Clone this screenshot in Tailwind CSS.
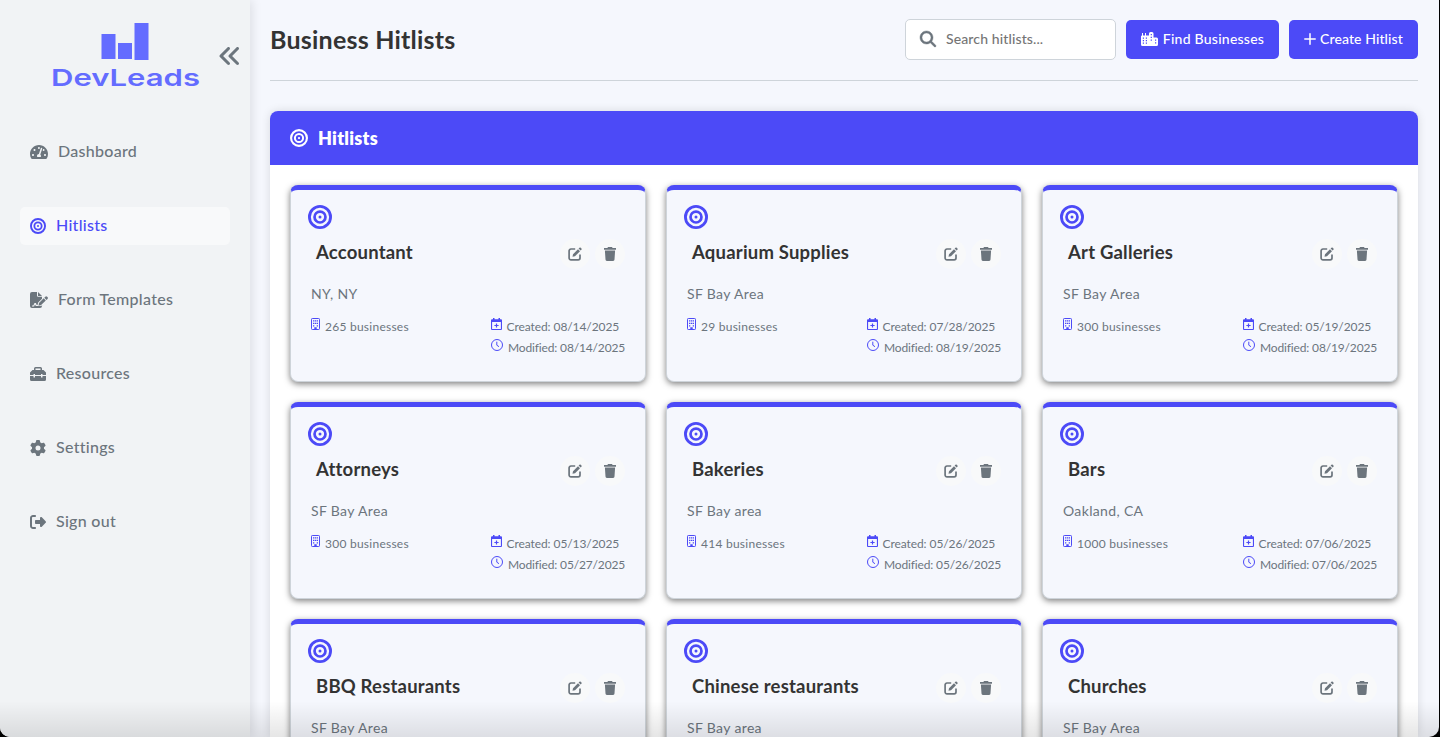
<!DOCTYPE html>
<html lang="en">
<head>
<meta charset="utf-8">
<title>DevLeads – Business Hitlists</title>
<script src="https://cdn.jsdelivr.net/npm/@tailwindcss/browser@4"></script>
</head>
<body class="h-[737px] overflow-hidden bg-black font-['Lato','Open_Sans',sans-serif] text-[#333]">
<svg class="hidden">
  <symbol id="target" viewBox="0 0 16 16"><g fill="none" stroke="currentColor"><circle cx="8" cy="8" r="7.05" stroke-width="1.9"/><circle cx="8" cy="8" r="3.65" stroke-width="1.8"/></g><circle cx="8" cy="8" r="1" fill="currentColor"/></symbol>
  <symbol id="edit" viewBox="0 0 14 14"><path d="M7.2 2H3.1A1.9 1.9 0 0 0 1.1 4v7A1.9 1.9 0 0 0 3.1 12.9h7A1.9 1.9 0 0 0 12 11V7.6" fill="none" stroke="currentColor" stroke-width="1.7"/><path d="M5 7.2 10 2.2 12 4.2 7 9.2 4.5 9.7ZM10.6 1.6l.8-.8a1 1 0 0 1 1.4 0l.6.6a1 1 0 0 1 0 1.4l-.8.8Z" fill="currentColor"/></symbol>
  <symbol id="trash" viewBox="0 0 12 14"><path d="M4 0h4l.6 1H12v1.8H0V1h3.4ZM.9 3.6h10.2l-.6 9a1.4 1.4 0 0 1-1.4 1.4H2.9a1.4 1.4 0 0 1-1.4-1.4Z" fill="currentColor"/></symbol>
  <symbol id="building" viewBox="0 0 9 12"><rect x=".5" y=".5" width="8" height="11" rx=".8" fill="none" stroke="currentColor"/><path d="M2 2.200h1.300v1.300H2zM3.850 2.200h1.300v1.300H3.850zM5.700 2.200H7v1.300H5.700zM2 4.700h1.300V6H2zM3.850 4.700h1.300V6H3.850zM5.700 4.700H7V6H5.700zM2 7.200h1.300v1.200H2zM5.700 7.200H7v1.200H5.700zM3.300 9.200h2.400V12H3.300z" fill="currentColor"/></symbol>
  <symbol id="calendar" viewBox="0 0 11 12"><path d="M2 0h1.500v1.200h4V0H9v1.200h1a1 1 0 0 1 1 1V11a1 1 0 0 1-1 1H1a1 1 0 0 1-1-1V2.200a1 1 0 0 1 1-1h1ZM1.100 4v6.900h8.800V4ZM4.900 5.500h1.200v1.400h1.500v1.200H6.100v1.400H4.900V8.100H3.400V6.900h1.500Z" fill="currentColor" fill-rule="evenodd"/></symbol>
  <symbol id="clock" viewBox="0 0 12 12"><g fill="none" stroke="currentColor"><circle cx="6" cy="6" r="5.5"/><path d="M5.800 2.700v3.500l2.200 1.500"/></g></symbol>
</svg>

<div class="relative flex h-[737px] w-[1438.500px] overflow-hidden rounded-b-[10px] bg-[#f5f7fd]">
  <aside class="z-10 w-[250px] shrink-0 bg-[#f1f3f5] px-5 text-base font-medium tracking-[0.28px] text-[#6c757d] shadow-[2px_0_10px_rgba(0,0,0,0.1)]">
    <div class="relative h-[133px] pt-[22px]">
      <svg class="ml-[30px] h-[70px] w-[152px]" viewBox="-2 0 152 70" fill="#646cff">
        <rect x="49.500" y="12" width="14" height="25"/><rect x="66" y="21" width="14" height="16"/><rect x="82.500" y="1" width="14" height="37"/>
        <text x="-1" y="63.800" font-family="Inter, sans-serif" font-weight="600" font-size="23.500" letter-spacing="0" textLength="149" lengthAdjust="spacingAndGlyphs">DevLeads</text>
      </svg>
      <svg class="absolute left-[197.500px] top-[44px] size-6" viewBox="0 0 512 512" fill="currentColor"><path d="M41.400 233.400c-12.500 12.500-12.500 32.800 0 45.300l160 160c12.500 12.500 32.800 12.500 45.300 0s12.500-32.800 0-45.300L109.300 256 246.600 118.600c12.500-12.500 12.500-32.800 0-45.300s-32.800-12.500-45.300 0l-160 160zm352-160l-160 160c-12.500 12.500-12.500 32.800 0 45.300l160 160c12.500 12.500 32.800 12.500 45.300 0s12.500-32.800 0-45.300L301.300 256 438.600 118.600c12.500-12.500 12.500-32.800 0-45.300s-32.800-12.500-45.300 0z"/></svg>
    </div>
    <nav class="flex flex-col gap-9">
      <a class="flex h-[38px] items-center gap-2.5 rounded-[5px] px-2.5">
        <svg class="h-4 w-[18px]" viewBox="0 0 576 512" fill="currentColor"><path d="M288 32C128.940 32 0 160.940 0 320c0 52.800 14.250 102.260 39.060 144.800 5.610 9.620 16.300 15.200 27.440 15.200h443c11.140 0 21.830-5.580 27.440-15.200C561.750 422.260 576 372.800 576 320c0-159.060-128.940-288-288-288zm0 64c14.710 0 26.580 10.130 30.320 23.650-1.110 2.260-2.640 4.230-3.450 6.670l-9.220 27.670c-5.130 3.490-10.970 6.010-17.640 6.010-17.670 0-32-14.330-32-32S270.330 96 288 96zM96 384c-17.670 0-32-14.330-32-32s14.330-32 32-32 32 14.330 32 32-14.330 32-32 32zm48-160c-17.670 0-32-14.330-32-32s14.330-32 32-32 32 14.330 32 32-14.330 32-32 32zm246.770-72.410l-61.330 184C343.130 347.330 352 364.540 352 384c0 11.720-3.380 22.550-8.880 32H232.880c-5.500-9.450-8.880-20.280-8.880-32 0-33.940 26.500-61.430 59.900-63.590l61.340-184.010c4.170-12.560 17.730-19.450 30.360-15.170 12.570 4.190 19.350 17.790 15.170 30.360zm14.660 57.200l15.520-46.550c3.470-1.290 7.130-2.230 11.050-2.230 17.670 0 32 14.330 32 32s-14.330 32-32 32c-11.380-.01-20.890-6.280-26.570-15.220zM480 384c-17.670 0-32-14.330-32-32s14.330-32 32-32 32 14.330 32 32-14.330 32-32 32z"/></svg>
        <span class="pb-0.5">Dashboard</span></a>
      <a class="flex h-[38px] items-center gap-2.5 rounded-[5px] bg-[#f8f9fa] px-2.5 text-[#4c4af7]">
        <svg class="size-4"><use href="#target"/></svg><span class="pb-0.5">Hitlists</span></a>
      <a class="flex h-[38px] items-center gap-2.5 rounded-[5px] px-2.5">
        <svg class="h-4 w-[18px]" viewBox="0 0 18 16" fill="currentColor"><path d="M2 0h5v3.500c0 .8.500 1.300 1.300 1.300H12v2L8.200 10.500 7.500 13H6.700l-.8-2-1.400.1-1.200 2.300H2v1h2l1-2 .9 1.600h4.300l2.200-.6L12 14a2 2 0 0 1-2 2H2a2 2 0 0 1-2-2V2A2 2 0 0 1 2 0ZM8 0l4 3.900H8ZM9 11l4.700-4.700 2.100 2.100-4.700 4.700-2.600.6ZM14.300 5.700l1-1a1.300 1.300 0 0 1 1.800 0l.4.400a1.300 1.300 0 0 1 0 1.800l-1 1Z"/></svg>
        <span class="pb-0.5">Form Templates</span></a>
      <a class="flex h-[38px] items-center gap-2.5 rounded-[5px] px-2.5">
        <svg class="size-4" viewBox="0 0 16 16" fill="currentColor"><path d="M4 4V2.500A1.500 1.500 0 0 1 5.500 1h5A1.500 1.500 0 0 1 12 2.500V4h1.500L16 6.500V9h-3.500V8H11v1H5V8H3.500v1H0V6.500L2.500 4Zm1.500 0h5V2.500h-5ZM0 10h3.500v1.500H5V10h6v1.500h1.500V10H16v3.500a1.500 1.500 0 0 1-1.500 1.500h-13A1.500 1.500 0 0 1 0 13.500Z" fill-rule="evenodd"/></svg>
        <span class="pb-0.5">Resources</span></a>
      <a class="flex h-[38px] items-center gap-2.5 rounded-[5px] px-2.5">
        <svg class="size-4" viewBox="0 0 512 512" fill="currentColor"><path d="M495.900 166.600c3.200 8.700.5 18.400-6.400 24.600l-43.300 39.400c1.100 8.300 1.700 16.800 1.700 25.400s-.6 17.100-1.700 25.400l43.300 39.400c6.900 6.200 9.600 15.900 6.400 24.600c-4.400 11.900-9.700 23.300-15.800 34.300l-4.700 8.100c-6.600 11-14 21.400-22.100 31.200c-5.900 7.200-15.700 9.600-24.500 6.800l-55.700-17.700c-13.400 10.300-28.200 18.900-44 25.400l-12.500 57.100c-2 9.100-9 16.300-18.200 17.800c-13.800 2.300-28 3.500-42.500 3.500s-28.700-1.200-42.500-3.500c-9.200-1.500-16.200-8.700-18.200-17.800l-12.500-57.100c-15.800-6.500-30.600-15.100-44-25.400L83.100 425.900c-8.800 2.800-18.600.3-24.500-6.800c-8.100-9.800-15.500-20.200-22.100-31.200l-4.700-8.100c-6.100-11-11.400-22.400-15.800-34.300c-3.200-8.700-.5-18.400 6.400-24.600l43.300-39.400C64.600 273.100 64 264.600 64 256s.6-17.100 1.700-25.400L22.400 191.200c-6.900-6.200-9.600-15.900-6.400-24.600c4.400-11.900 9.700-23.300 15.800-34.300l4.700-8.100c6.600-11 14-21.400 22.100-31.200c5.900-7.200 15.700-9.600 24.500-6.800l55.700 17.700c13.400-10.300 28.200-18.900 44-25.400l12.500-57.100c2-9.100 9-16.300 18.200-17.800C227.300 1.200 241.500 0 256 0s28.700 1.200 42.500 3.500c9.200 1.500 16.200 8.700 18.200 17.800l12.500 57.100c15.800 6.500 30.600 15.100 44 25.400l55.700-17.700c8.800-2.800 18.600-.3 24.500 6.800c8.100 9.800 15.500 20.200 22.100 31.200l4.700 8.100c6.100 11 11.400 22.400 15.800 34.300zM256 336a80 80 0 1 0 0-160 80 80 0 1 0 0 160z"/></svg>
        <span class="pb-0.5">Settings</span></a>
      <a class="flex h-[38px] items-center gap-2.5 rounded-[5px] px-2.5">
        <svg class="size-4" viewBox="0 0 512 512" fill="currentColor"><path d="M377.900 105.900L500.700 228.700c7.200 7.200 11.300 17.100 11.300 27.300s-4.100 20.100-11.300 27.300L377.900 406.100c-6.400 6.400-15 9.900-24 9.900c-18.700 0-33.900-15.200-33.900-33.900l0-62.100-128 0c-17.700 0-32-14.300-32-32l0-64c0-17.700 14.300-32 32-32l128 0 0-62.100c0-18.700 15.200-33.900 33.900-33.900c9 0 17.600 3.600 24 9.900zM160 96L96 96c-17.700 0-32 14.300-32 32l0 256c0 17.700 14.300 32 32 32l64 0c17.700 0 32 14.300 32 32s-14.300 32-32 32l-64 0c-53 0-96-43-96-96L0 128C0 75 43 32 96 32l64 0c17.700 0 32 14.300 32 32s-14.300 32-32 32z"/></svg>
        <span class="pb-0.5">Sign out</span></a>
    </nav>
  </aside>

  <main class="ml-5 w-[1148px] shrink-0">
    <header class="flex h-[81px] items-center justify-between border-b border-[#ced4da]">
      <h1 class="text-[25px] font-bold tracking-[0.22px]">Business Hitlists</h1>
      <div class="mb-0.5 flex items-center gap-2.5 text-sm font-medium">
        <div class="flex h-[41px] w-[211px] items-center gap-2.5 rounded-[5px] border border-[#ced4da] bg-white pl-3.5 tracking-[0.12px] text-[#757575]">
          <svg class="size-4 overflow-visible text-[#6c757d]" viewBox="0 0 512 512" fill="currentColor" stroke="currentColor" stroke-width="14"><path d="M416 208c0 45.900-14.900 88.300-40 122.700L502.600 457.400c12.500 12.500 12.500 32.800 0 45.300s-32.800 12.500-45.300 0L330.700 376c-34.400 25.200-76.800 40-122.700 40C93.100 416 0 322.900 0 208S93.100 0 208 0S416 93.100 416 208zM208 352a144 144 0 1 0 0-288 144 144 0 1 0 0 288z"/></svg>
          <span>Search hitlists...</span>
        </div>
        <button class="flex h-[39px] w-[153px] items-center justify-center gap-[5px] rounded-[5px] bg-[#4c4af7] tracking-[0.24px] text-white">
          <svg class="h-3.5 w-[17px]" viewBox="0 0 17 14" fill="currentColor"><path d="M0 4.500A1 1 0 0 1 1 3.500V1h1v2.500h2V1h1v2.500h3V1.500A1.500 1.500 0 0 1 9.500 0H11A1.500 1.500 0 0 1 12.500 1.500V5.500H15.500A1.500 1.500 0 0 1 17 7v5.500A1.500 1.500 0 0 1 15.500 14H1.500A1.500 1.500 0 0 1 0 12.500ZM1.800 5.500v1.200H3V5.500ZM4.800 5.500v1.200H6V5.500ZM1.800 8v1.200H3V8ZM4.800 8v1.200H6V8ZM1.800 10.500v1.200H3v-1.200ZM4.800 10.500v1.200H6v-1.200ZM9.700 2v1.300h1.200V2ZM9.700 4.700V6h1.200V4.700ZM9.700 7.400v1.300h1.200V7.400ZM14 7.500v1.200h1.200V7.500ZM14 10.200v1.200h1.200v-1.200Z" fill-rule="evenodd"/></svg>
          <span>Find Businesses</span>
        </button>
        <button class="flex h-[39px] w-[129px] items-center justify-center gap-1 rounded-[5px] bg-[#4c4af7] tracking-[0.1px] text-white">
          <svg class="size-3" viewBox="0 0 12 12"><path d="M6 .8v10.400M.8 6h10.400" stroke="currentColor" stroke-width="1.500" stroke-linecap="round"/></svg>
          <span>Create Hitlist</span>
        </button>
      </div>
    </header>

    <section class="mt-[30px] h-[626px] rounded-t-lg bg-white shadow-[0_0_10px_rgba(0,0,0,0.12)]">
      <h2 class="flex h-[54px] items-center gap-2.5 rounded-t-lg bg-[#4c4af7] px-5 text-lg font-extrabold tracking-[0.25px] text-white">
        <svg class="size-[18px]"><use href="#target"/></svg><span>Hitlists</span>
      </h2>
      <div id="cards" class="grid grid-cols-3 gap-5 p-5"></div>
    </section>
  </main>
  <div class="absolute inset-x-0 bottom-0 z-20 h-9 bg-linear-to-b from-black/0 to-black/10"></div>
</div>

<script>
const lists = [
  ['Accountant', 'NY, NY', 265, '08/14/2025', '08/14/2025'],
  ['Aquarium Supplies', 'SF Bay Area', 29, '07/28/2025', '08/19/2025'],
  ['Art Galleries', 'SF Bay Area', 300, '05/19/2025', '08/19/2025'],
  ['Attorneys', 'SF Bay Area', 300, '05/13/2025', '05/27/2025'],
  ['Bakeries', 'SF Bay area', 414, '05/26/2025', '05/26/2025'],
  ['Bars', 'Oakland, CA', 1000, '07/06/2025', '07/06/2025'],
  ['BBQ Restaurants', 'SF Bay Area'],
  ['Chinese restaurants', 'SF Bay area'],
  ['Churches', 'SF Bay Area'],
];
const stats = (count, created, modified) => `
    <div class="mt-3 flex justify-between text-xs leading-[21px] text-[#6c757d]">
      <div class="flex h-[21px] gap-[5px]"><svg class="mt-0.5 h-3 w-[9px] shrink-0 text-[#4c4af7]"><use href="#building"/></svg><span class="tracking-[0.25px]">${count} businesses</span></div>
      <div class="w-[134px] whitespace-nowrap">
        <div class="flex gap-[5px]"><svg class="mt-0.5 h-3 w-[11px] shrink-0 text-[#4c4af7]"><use href="#calendar"/></svg><span class="-ml-[0.5px] tracking-[-0.08px]">Created: ${created}</span></div>
        <div class="flex gap-[5px]"><svg class="mt-0.5 size-3 shrink-0 text-[#4c4af7]"><use href="#clock"/></svg><span class="tracking-[-0.150px]">Modified: ${modified}</span></div>
      </div>
    </div>`;
document.getElementById('cards').innerHTML = lists.map(([name, place, count, created, modified]) => `
  <article class="h-[197px] rounded-lg border border-t-[5px] border-[#ced4da] border-t-[#4c4af7] bg-[#f5f7fd] px-5 pt-[15px] shadow-[0_2px_6px_rgba(0,0,0,0.5)]">
    <svg class="-ml-[2.700px] size-6 text-[#4c4af7]"><use href="#target"/></svg>
    <div class="flex h-[50px] items-start justify-between pl-[5px]">
      <h3 class="mt-[11px] text-[18.500px] leading-6 font-bold tracking-[0.2px] whitespace-nowrap">${name}</h3>
      <div class="mt-[10px] flex gap-[5px] text-[#6c757d]">
        <span class="flex size-[30px] items-center justify-center rounded-full bg-[#f8f9fa]"><svg class="size-3.5"><use href="#edit"/></svg></span>
        <span class="flex size-[30px] items-center justify-center rounded-full bg-[#f8f9fa]"><svg class="h-3.5 w-3"><use href="#trash"/></svg></span>
      </div>
    </div>
    <p class="mt-[5px] text-sm leading-5 tracking-[0.35px] text-[#6c757d]">${place}</p>
    ${count ? stats(count, created, modified) : ''}
  </article>`).join('');
</script>
</body>
</html>
